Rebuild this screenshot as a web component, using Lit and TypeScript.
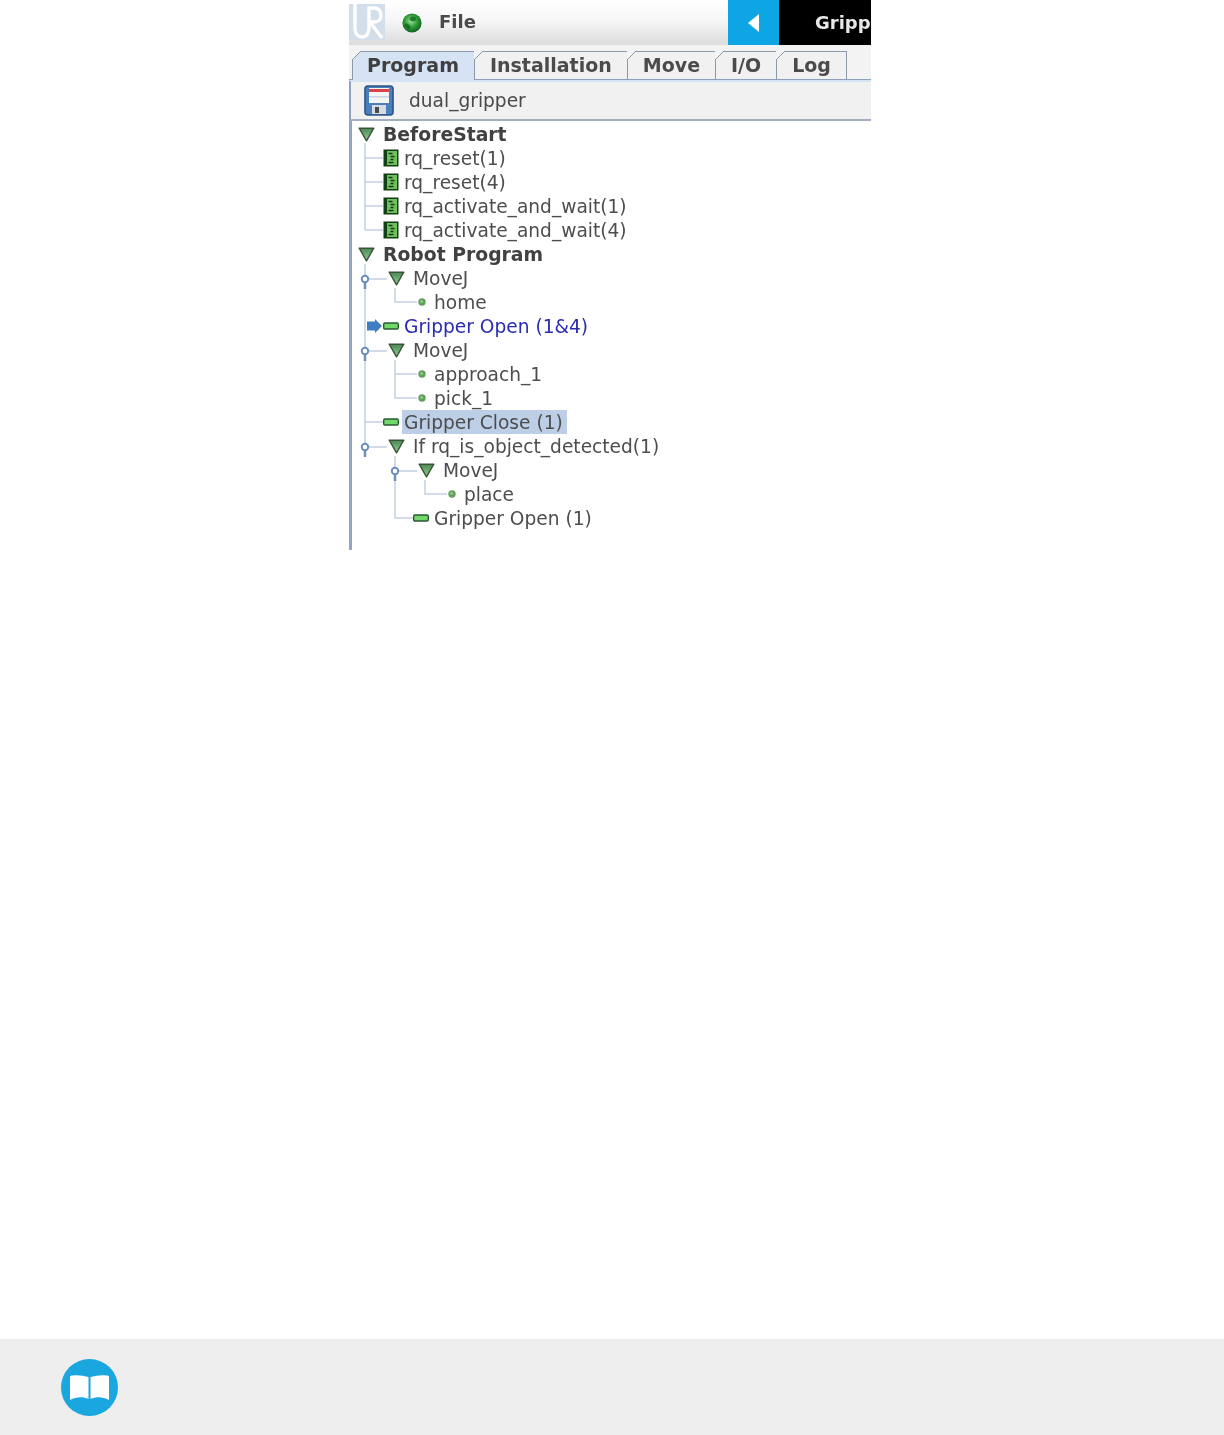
import { LitElement, html, css, svg } from "lit";
import { customElement } from "lit/decorators.js";

type Kind = "tri" | "script" | "dash" | "dot";
interface Row { text: string; x: number; kind: Kind; bold?: boolean; current?: boolean; selected?: boolean; }

const ROWS: Row[] = [
  { text: "BeforeStart", x: 383, kind: "tri", bold: true },
  { text: "rq_reset(1)", x: 404, kind: "script" },
  { text: "rq_reset(4)", x: 404, kind: "script" },
  { text: "rq_activate_and_wait(1)", x: 404, kind: "script" },
  { text: "rq_activate_and_wait(4)", x: 404, kind: "script" },
  { text: "Robot Program", x: 383, kind: "tri", bold: true },
  { text: "MoveJ", x: 413, kind: "tri" },
  { text: "home", x: 434, kind: "dot" },
  { text: "Gripper Open (1&4)", x: 404, kind: "dash", current: true },
  { text: "MoveJ", x: 413, kind: "tri" },
  { text: "approach_1", x: 434, kind: "dot" },
  { text: "pick_1", x: 434, kind: "dot" },
  { text: "Gripper Close (1)", x: 404, kind: "dash", selected: true },
  { text: "If rq_is_object_detected(1)", x: 413, kind: "tri" },
  { text: "MoveJ", x: 443, kind: "tri" },
  { text: "place", x: 464, kind: "dot" },
  { text: "Gripper Open (1)", x: 434, kind: "dash" },
];

const TABS = ["Program", "Installation", "Move", "I/O", "Log"];
const TREE_X = 352;

const icons: Record<Kind, unknown> = {
  tri: html`<svg class="i tri" width="17" height="15" viewBox="0 0 17 15">
    <path d="M1.2 1.2h14.600L8.500 13.800z" fill="url(#tg)" stroke="#3a543a" stroke-width="1.400" stroke-linejoin="round"/>
    <defs><linearGradient id="tg" x1="0" y1="0" x2="0" y2="1"><stop offset="0" stop-color="#4a8a52"/><stop offset="1" stop-color="#96cc92"/></linearGradient></defs>
  </svg>`,
  script: html`<svg class="i script" width="16" height="18" viewBox="0 0 16 18">
    <rect x="0.500" y="0.500" width="15" height="17" fill="#123f16"/>
    <rect x="4" y="2" width="10" height="14" fill="#6cc25c"/>
    <path d="M5.500 4.500h4M7.500 7.500h4M7.500 10.500h3M5.500 13.500h5" stroke="#143a14" stroke-width="1.400"/>
  </svg>`,
  dash: html`<svg class="i dash" width="16" height="8" viewBox="0 0 16 8">
    <rect x="0.700" y="1" width="14.600" height="6" rx="1.200" fill="#6fd868" stroke="#2a5a30" stroke-width="1.400"/>
  </svg>`,
  dot: html`<svg class="i dot" width="8" height="10" viewBox="0 0 8 10">
    <circle cx="4" cy="5" r="3.700" fill="#5f9f58"/><circle cx="3.600" cy="4.400" r="1.600" fill="#8cc486"/>
  </svg>`,
};

const pin = (x: number, y: number) => svg`
  <circle cx=${x} cy=${y} r="3.200" fill="#fff" stroke="#6c8fbd" stroke-width="2"/>
  <path d=${`M${x} ${y + 3}v7`} stroke="#6c8fbd" stroke-width="2.500" fill="none"/>`;

const LINES = [
  "M365 143V230", "M365 158H383", "M365 182H383", "M365 206H383", "M365 230H383",
  "M365 264V446", "M365 279H387", "M365 351H387", "M365 422H383", "M365 447H387",
  "M395 288V302H417",
  "M395 360V398H417", "M395 374H417",
  "M395 456V518H413", "M395 471H417",
  "M425 480V494H447",
];

@customElement("app-root")
export class AppRoot extends LitElement {
  static styles = css`
    :host { display: flex; flex-direction: column; width: 1224px; height: 1435px; background: #fff; font-family: "DejaVu Sans", sans-serif; overflow: hidden; }
    .stage { flex: 1; padding-left: 349px; }
    .shot { position: relative; width: 522px; height: 550px; overflow: hidden; display: flex; flex-direction: column; background: #fff; filter: blur(0.45px); }

    .top { height: 45px; flex: none; display: flex; align-items: stretch; background: linear-gradient(180deg, #ffffff 0%, #f6f6f6 45%, #dcdcdc 100%); }
    .logo { margin: 4px 0 0 0; flex: none; }
    .globe { margin: 13px 0 0 17px; flex: none; }
    .file { margin-left: 17px; font-size: 18px; font-weight: 700; line-height: 44px; color: #4a4a4a; flex: 1; }
    .back { width: 51px; background: #0ea5e4; display: flex; align-items: center; justify-content: center; flex: none; }
    .title { width: 92px; background: #000; color: #e8e8e8; font-weight: 700; font-size: 18px; line-height: 46px; padding-left: 36px; box-sizing: border-box; white-space: nowrap; overflow: hidden; flex: none; }

    .tabs { height: 35px; flex: none; box-sizing: border-box; display: flex; align-items: flex-end; padding: 0 0 0 3px; background: #f3f3f3; border-bottom: 1px solid #8fa0bd; }
    .tab { position: relative; height: 28px; box-sizing: border-box; font-weight: 700; font-size: 19px; line-height: 27px; color: #4b4b4b; background: #f1f1f1; border: 1px solid #8d99a8; border-bottom: none; border-left: none; padding: 0 15px; }
    .tab::before { content: ""; position: absolute; left: -1px; top: -1px; width: 9px; height: 9px; background: linear-gradient(to bottom right, #f3f3f3 0 calc(50% - 0.7px), #8d99a8 calc(50% - 0.7px) calc(50% + 0.7px), #f1f1f1 calc(50% + 0.7px)); }
    .tab.on { background: #d6e3f4; color: #3f3f3f; border-left: 1px solid #8d99a8; margin-bottom: -1px; height: 29px; padding-left: 14px; }
    .tab.on::before { background: linear-gradient(to bottom right, #f3f3f3 0 calc(50% - 0.7px), #8d99a8 calc(50% - 0.7px) calc(50% + 0.7px), #d6e3f4 calc(50% + 0.7px)); }

    .bar { height: 41px; flex: none; box-sizing: border-box; display: flex; align-items: center; background: #f1f1f1; border-top: 2px solid #d6e3f4; border-bottom: 2px solid #a3adbd; border-left: 2px solid #8fa3c4; padding-left: 13px; }
    .name { margin: 1px 0 0 15px; font-size: 18.600px; color: #4a4a4a; line-height: 36px; }

    .tree { position: relative; flex: 1; box-sizing: border-box; background: #fff; border-left: 3px solid #8fa6c9; padding-top: 1px; }
    .links { position: absolute; left: 0; top: 0; }
    .row { position: relative; height: 24px; display: flex; align-items: center; font-size: 18.600px; color: #4d4d4d; white-space: nowrap; }
    .slot { width: 30px; flex: none; display: flex; align-items: center; justify-content: flex-end; }
    .i { display: block; flex: none; }
    .i.tri { margin-right: 8px; }
    .i.script { margin-right: 5px; }
    .i.dash { margin-right: 5px; }
    .i.dot { margin-right: 8px; }
    .label { height: 24px; line-height: 26px; padding: 0 4px 0 2px; margin-left: -2px; }
    .bold .label { font-weight: 700; font-size: 18.800px; color: #414141; }
    .current .label { color: #2b2bb3; }
    .selected .label { background: #bccfe6; }
    .arrow { position: absolute; left: 15px; top: 5px; }

    footer { height: 96px; flex: none; background: #eeeeee; display: flex; align-items: center; padding-left: 61px; }
  `;

  render() {
    return html`
      <div class="stage">
        <div class="shot">
          <div class="top">
            <svg class="logo" width="36" height="36" viewBox="0 0 36 36">
              <rect width="36" height="36" fill="#d3deeb"/>
              <path d="M6 0V24C6 30 9 33 13 33S20 30 20 24V4H25C31 4 32 9 32 12S30 18 25 18H21L33 34" fill="none" stroke="#fff" stroke-width="3.400"/>
            </svg>
            <svg class="globe" width="20" height="20" viewBox="0 0 20 20">
              <defs><radialGradient id="gl" cx="0.45" cy="0.4" r="0.65"><stop offset="0" stop-color="#9fe39a"/><stop offset="0.5" stop-color="#2f9a37"/><stop offset="1" stop-color="#0c5a1a"/></radialGradient></defs>
              <circle cx="10" cy="10" r="9.600" fill="url(#gl)"/>
              <path d="M9 4c3-1 5 0 5 2s-3 3-5 2-2-3 0-4zM3 11c2-1 4 0 5 2s0 4-2 3-4-3-3-5z" fill="#0f6a1e" opacity="0.800"/>
            </svg>
            <div class="file">File</div>
            <div class="back"><svg width="12" height="18" viewBox="0 0 12 18"><path d="M11 0V18L0 9z" fill="#fff"/></svg></div>
            <div class="title">Gripper</div>
          </div>
          <div class="tabs">
            ${TABS.map((t, i) => html`<div class="tab ${i === 0 ? "on" : ""}">${t}</div>`)}
          </div>
          <div class="bar">
            <svg width="30" height="31" viewBox="0 0 30 31">
              <rect x="1" y="1" width="28" height="29" rx="3" fill="#4a7fbb" stroke="#2c5386" stroke-width="1.600"/>
              <rect x="5" y="3" width="20" height="15" fill="#f4f4f4"/>
              <rect x="5" y="4" width="20" height="3" fill="#d8434a"/>
              <rect x="5" y="11" width="20" height="1.500" fill="#c9d3e0"/>
              <rect x="8" y="20" width="14" height="9" fill="#d6dce4"/>
              <rect x="11" y="22" width="4" height="6" fill="#4a4a4a"/>
            </svg>
            <div class="name">dual_gripper</div>
          </div>
          <div class="tree">
            <svg class="links" width="519" height="430" viewBox="${TREE_X} 121 519 430">
              ${LINES.map((d) => svg`<path d=${d} fill="none" stroke="#c3cfe0" stroke-width="1.500"/>`)}
              ${pin(365, 279)}${pin(365, 351)}${pin(365, 447)}${pin(395, 471)}
            </svg>
            ${ROWS.map((r) => html`
              <div class="row ${r.bold ? "bold" : ""} ${r.current ? "current" : ""} ${r.selected ? "selected" : ""}" style="padding-left:${r.x - TREE_X - 30}px">
                ${r.current ? html`<svg class="arrow" width="15" height="14" viewBox="0 0 15 14"><path d="M0 2.500H8V0L15 7 8 14V11.500H0z" fill="#3b7fc0"/></svg>` : ""}
                <span class="slot">${icons[r.kind]}</span>
                <span class="label">${r.text}</span>
              </div>`)}
          </div>
        </div>
      </div>
      <footer>
        <svg width="57" height="57" viewBox="0 0 57 57">
          <circle cx="28.500" cy="28.500" r="28.500" fill="#1aa7e0"/>
          <path d="M10.500 16.500Q19 15.500 27.500 18V40C22 37.500 15 37.500 9 41V18Q9 16.700 10.500 16.500z" fill="#fff"/>
          <path d="M46.500 16.500Q38 15.500 29.500 18V40C35 37.500 42 37.500 48 41V18Q48 16.700 46.500 16.500z" fill="#fff"/>
        </svg>
      </footer>
    `;
  }
}
